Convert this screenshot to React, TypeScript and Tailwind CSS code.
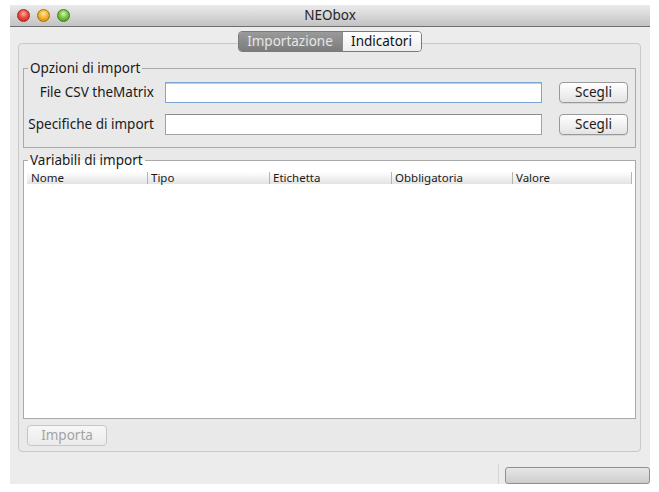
import React from 'react';

const font = "font-['Lucida_Grande','Noto_Sans','DejaVu_Sans',sans-serif]";

const columns = [
  { label: 'Nome', cls: 'w-[120px] pl-[4px]' },
  { label: 'Tipo', cls: 'w-[122px] pl-[3px] border-l border-[#b5b5b5]' },
  { label: 'Etichetta', cls: 'w-[122px] pl-[3px] border-l border-[#b5b5b5]' },
  { label: 'Obbligatoria', cls: 'w-[121px] pl-[3px] border-l border-[#b5b5b5]' },
  { label: 'Valore', cls: 'w-[120px] pl-[3px] border-l border-r border-[#b5b5b5]' },
];

function Light({ color }: { color: 'red' | 'yellow' | 'green' }) {
  const cls =
    color === 'red'
      ? 'bg-[radial-gradient(circle_at_50%_35%,#ffb0a8_0%,#f04a3c_45%,#b8201a_100%)] border-[#9b2a22]'
      : color === 'yellow'
      ? 'bg-[radial-gradient(circle_at_50%_35%,#ffe9a8_0%,#f5b631_45%,#c27b0c_100%)] border-[#a8710f]'
      : 'bg-[radial-gradient(circle_at_50%_35%,#d8f5b0_0%,#7bc545_45%,#3d8a1a_100%)] border-[#3f7d22]';
  return <div className={`w-[13px] h-[13px] rounded-full border ${cls}`} />;
}

function PushButton({ label, disabled }: { label: string; disabled?: boolean }) {
  return (
    <button
      className={`h-[21px] rounded-[4px] border text-[13.5px] leading-none bg-gradient-to-b ${
        disabled
          ? 'border-[#c6c6c6] from-[#f7f7f7] to-[#ebebeb] text-[#a3a3a3]'
          : 'border-[#9a9a9a] from-[#ffffff] to-[#e4e4e4] text-[#1a1a1a] shadow-[0_1px_0_rgba(0,0,0,0.08)]'
      }`}
    >
      {label}
    </button>
  );
}

export default function App() {
  return (
    <div className={`w-[659px] h-[492px] bg-white pt-[5px] pl-[10px] ${font}`}>
      <div className="w-[640px] h-[479px] flex flex-col bg-[#ececec]">
        {/* barra del titolo */}
        <div className="h-[22px] grid grid-cols-[1fr_auto_1fr] items-center bg-gradient-to-b from-[#ebebeb] to-[#c3c3c3] border-b border-[#6f6f6f]">
          <div className="flex items-center gap-[7px] pl-[7px]">
            <Light color="red" />
            <Light color="yellow" />
            <Light color="green" />
          </div>
          <div className="text-[13.5px] text-[#262626] leading-none">NEObox</div>
          <div />
        </div>

        {/* contenuto */}
        <div className="pt-[4px] pl-[8px]">
          <div className="relative z-10 flex justify-center w-[623px]">
            <div className="flex h-[21px] rounded-[4px] border border-[#7a7a7a] overflow-hidden text-[13.5px] leading-none">
              <div className="w-[103px] flex items-center justify-center bg-gradient-to-b from-[#9a9a9a] to-[#7c7c7c] text-[#e6e6e6]">
                Importazione
              </div>
              <div className="w-[79px] flex items-center justify-center border-l border-[#8a8a8a] bg-gradient-to-b from-[#ffffff] to-[#ededed] text-[#111]">
                Indicatori
              </div>
            </div>
          </div>

          <div className="-mt-[9px] w-[623px] h-[409px] rounded-[4px] border border-[#c9c9c9] bg-[#e9e9e9] pt-[17px] px-[4px]">
            <fieldset className="w-[613px] min-w-0 border border-[#a9a9a9] px-0 pt-[7px] pb-[12px]">
              <legend className="ml-[4px] px-[2px] text-[13.5px] leading-[14px] text-[#1a1a1a]">Opzioni di import</legend>
              <div className="flex items-center h-[21px] pl-[3px]">
                <div className="w-[127px] text-right text-[13.5px] text-[#1a1a1a] whitespace-nowrap">File CSV theMatrix</div>
                <div className="ml-[11px] w-[377px] h-[21px] bg-white border border-[#7ea5d3] shadow-[inset_0_1px_0_#b8cce6]" />
                <div className="ml-[17px] w-[69px] flex flex-col">
                  <PushButton label="Scegli" />
                </div>
              </div>
              <div className="flex items-center h-[21px] pl-[3px] mt-[11px]">
                <div className="w-[127px] text-right text-[13.5px] text-[#1a1a1a] whitespace-nowrap">Specifiche di import</div>
                <div className="ml-[11px] w-[377px] h-[21px] bg-white border border-[#a3a3a3] border-t-[#8c8c8c]" />
                <div className="ml-[17px] w-[69px] flex flex-col">
                  <PushButton label="Scegli" />
                </div>
              </div>
            </fieldset>

            <fieldset className="mt-[5px] w-[613px] min-w-0 border border-[#a9a9a9] bg-white px-[3px] pt-[5px] pb-0">
              <legend className="ml-[1px] px-[2px] text-[13.5px] leading-[14px] text-[#1a1a1a]">Variabili di import</legend>
              <div className="flex h-[12px] bg-gradient-to-b from-[#ffffff] to-[#e3e3e3] text-[11.5px] leading-[12px] text-[#1a1a1a]">
                {columns.map((c) => (
                  <div key={c.label} className={c.cls}>
                    {c.label}
                  </div>
                ))}
              </div>
              <div className="h-[234px]" />
            </fieldset>

            <div className="mt-[6px] ml-[4px] w-[80px] flex flex-col">
              <PushButton label="Importa" disabled />
            </div>
          </div>
        </div>

        {/* barra di stato */}
        <div className="flex-1 flex items-end justify-end">
          <div className="w-px h-[20px] bg-[#d6d6d6] mr-[6px]" />
          <div className="w-[145px] h-[17px] rounded-[3px] border border-[#8f8f8f] bg-gradient-to-b from-[#e6e6e6] to-[#cdcdcd]" />
        </div>
      </div>
    </div>
  );
}
